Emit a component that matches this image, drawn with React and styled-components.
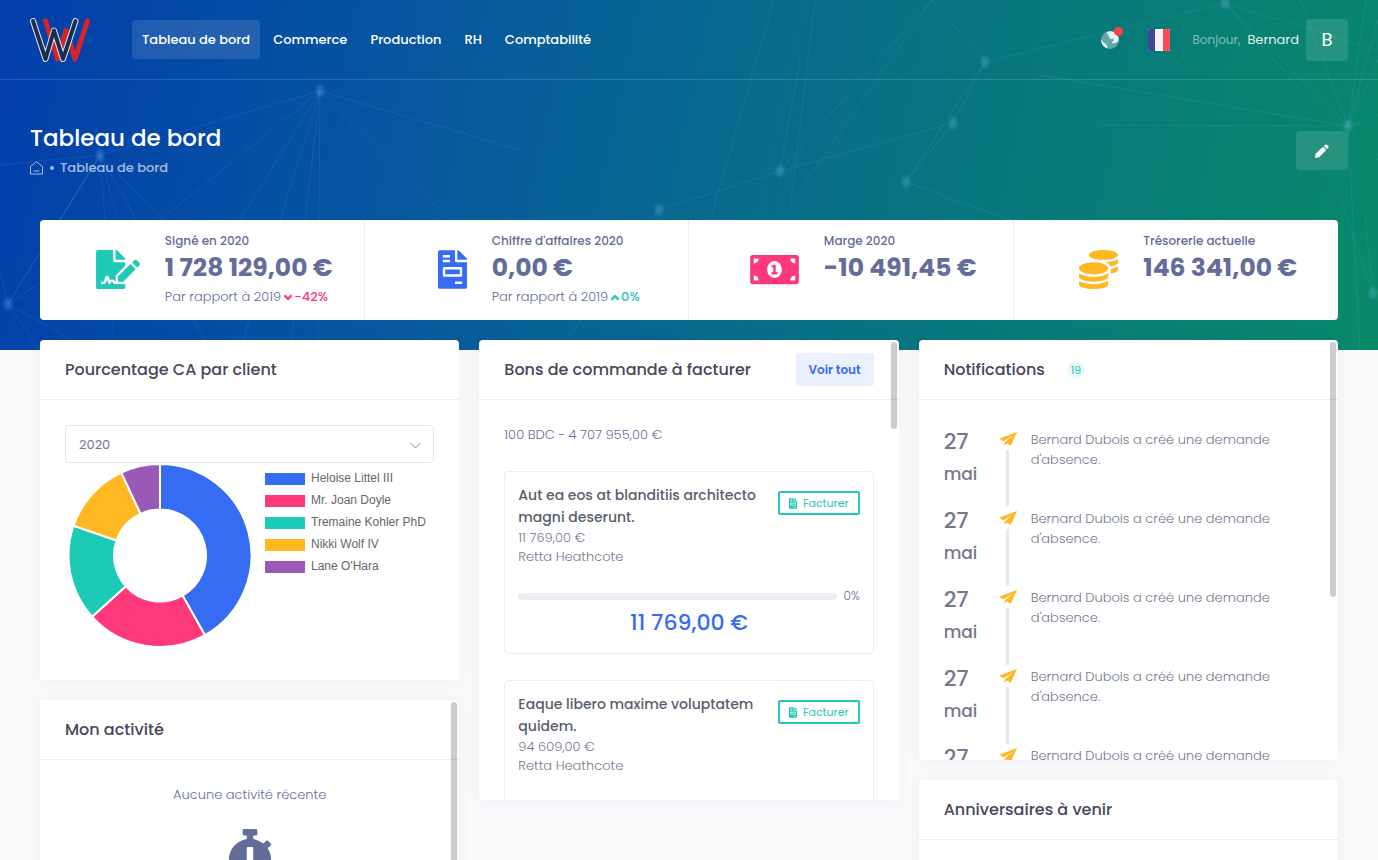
import React, { useState } from 'react';
import styled, { createGlobalStyle } from 'styled-components';
import {
  FaAngleDown,
  FaAngleUp,
  FaCoins,
  FaFileInvoice,
  FaFileSignature,
  FaMoneyBillAlt,
  FaStopwatch,
} from 'react-icons/fa';

const colors = {
  brand: '#366cf3',
  pink: '#fd397a',
  teal: '#1dc9b7',
  yellow: '#ffb822',
  purple: '#9b59b6',
  text: '#646c9a',
  muted: '#74788d',
  dark: '#48465b',
  border: '#ebedf2',
};

const GlobalStyle = createGlobalStyle`
  * {
    box-sizing: border-box;
  }

  html {
    scrollbar-width: none;
  }

  body {
    margin: 0;
    background: #f9f9fc;
    color: ${colors.text};
    font-family: Poppins, Inter, "Open Sans", sans-serif;
    font-size: 13px;
    line-height: 20px;
  }

  h1, h2, h3, p, ul {
    margin: 0;
    padding: 0;
  }

  button, select {
    font-family: inherit;
  }
`;

// Hero
const Hero = styled.div`
  position: relative;
  padding-bottom: 30px;
  background: linear-gradient(102deg, #0340ab 2%, #0755a0 28%, #086791 48%, #08757f 68%, #087f74 84%, #09896a 100%);
`;

const Network = styled.svg`
  position: absolute;
  inset: 0;
  width: 100%;
  height: 100%;
`;

const Header = styled.header`
  position: relative;
  display: flex;
  align-items: center;
  height: 80px;
  padding: 0 30px;
  border-bottom: 1px solid rgba(255, 255, 255, 0.15);
`;

const LogoLink = styled.a`
  display: flex;
  margin-right: 42px;
`;

const Nav = styled.nav`
  display: flex;
  flex: 1;
  gap: 3px;
`;

const NavLink = styled.a`
  padding: 0 10px;
  border-radius: 4px;
  background: ${props => (props.$active ? 'rgba(255, 255, 255, 0.12)' : 'transparent')};
  color: #fff;
  font-weight: 500;
  line-height: 39px;
  text-decoration: none;
`;

const Topbar = styled.div`
  display: flex;
  align-items: center;
`;

const IconButton = styled.button`
  position: relative;
  display: flex;
  padding: 0;
  margin-right: ${props => props.$gap};
  border: 0;
  background: none;
  cursor: pointer;
`;

const Dot = styled.span`
  position: absolute;
  top: -4px;
  right: -4px;
  width: 9px;
  height: 9px;
  border-radius: 50%;
  background: #fd4444;
`;

const UserButton = styled.button`
  display: flex;
  align-items: center;
  gap: 7px;
  padding: 0;
  border: 0;
  background: none;
  color: rgba(255, 255, 255, 0.9);
  font-size: 13px;
  cursor: pointer;

  small {
    color: rgba(255, 255, 255, 0.5);
    font-size: 12px;
  }
`;

const Avatar = styled.span`
  width: 42px;
  border-radius: 4px;
  background: rgba(255, 255, 255, 0.12);
  color: #fff;
  font-size: 18px;
  line-height: 42px;
  text-align: center;
`;

const Subheader = styled.div`
  position: relative;
  display: flex;
  align-items: center;
  justify-content: space-between;
  padding: 41px 30px 40px;
`;

const PageTitle = styled.h1`
  color: #fff;
  font-size: 23px;
  font-weight: 500;
  line-height: 34px;
`;

const Breadcrumb = styled.div`
  display: flex;
  align-items: center;
  gap: 6px;
  height: 25px;
  color: rgba(255, 255, 255, 0.65);

  a {
    display: flex;
    color: inherit;
    font-weight: 500;
    text-decoration: none;
  }

  i {
    width: 4px;
    height: 4px;
    border-radius: 50%;
    background: currentColor;
  }
`;

const EditButton = styled.button`
  display: flex;
  align-items: center;
  justify-content: center;
  width: 52px;
  height: 39px;
  border: 0;
  border-radius: 4px;
  background: rgba(255, 255, 255, 0.12);
  cursor: pointer;
`;

// Stats
const Stats = styled.section`
  position: relative;
  display: grid;
  grid-template-columns: repeat(4, 1fr);
  margin: 0 40px;
  border-radius: 4px;
  background: #fff;
`;

const Stat = styled.div`
  display: flex;
  align-items: center;
  justify-content: center;
  min-height: 100px;

  &:not(:last-child) {
    border-right: 1px solid ${colors.border};
  }
`;

const StatIcon = styled.div`
  display: flex;
  padding: 0 25px 2px;
  color: ${props => props.$color};

  svg {
    width: ${props => props.$width};
    height: 39px;
  }
`;

const StatBody = styled.div`
  align-self: flex-start;
  padding-top: 11px;
`;

const StatLabel = styled.div`
  font-size: 12px;
  font-weight: 500;
`;

const StatValue = styled.div`
  font-size: 25px;
  font-weight: 700;
  line-height: 34px;
  white-space: nowrap;
`;

const StatTrend = styled.div`
  display: flex;
  align-items: center;
  gap: 3px;
  margin-top: 2px;
  font-weight: 300;
  white-space: nowrap;

  strong {
    display: flex;
    align-items: center;
    gap: 2px;
    color: ${props => props.$color};
    font-weight: 500;
  }

  svg {
    width: 8px;
    height: 13px;
    stroke: currentColor;
    stroke-width: 20px;
  }
`;

// Cards
const Columns = styled.main`
  position: relative;
  display: grid;
  grid-template-columns: repeat(3, minmax(0, 1fr));
  align-items: start;
  gap: 20px;
  margin-top: -10px;
  padding: 0 40px 20px;
`;

const Column = styled.div`
  display: flex;
  flex-direction: column;
  gap: 20px;
`;

const Card = styled.section`
  position: relative;
  height: ${props => props.$height || 'auto'};
  overflow: hidden;
  border-radius: 4px;
  background: #fff;
  box-shadow: 0 0 13px rgba(82, 63, 105, 0.05);
`;

const CardHeader = styled.div`
  display: flex;
  align-items: center;
  height: 60px;
  padding: 0 25px;
  border-bottom: 1px solid ${colors.border};
`;

const CardTitle = styled.h2`
  color: ${colors.dark};
  font-size: 16px;
  font-weight: 500;
`;

const CardBody = styled.div`
  padding: 25px;
`;

const Thumb = styled.div`
  position: absolute;
  top: 2px;
  right: 2px;
  width: 6px;
  height: ${props => props.$size};
  border-radius: 3px;
  background: rgba(0, 0, 0, 0.2);
`;

const SelectBox = styled.div`
  position: relative;

  svg {
    position: absolute;
    top: 17px;
    right: 13px;
    pointer-events: none;
  }
`;

const Select = styled.select`
  display: block;
  width: 100%;
  height: 38px;
  padding: 0 13px;
  border: 1px solid #e2e5ec;
  border-radius: 4px;
  appearance: none;
  background: #fff;
  color: ${colors.muted};
  font-size: 13px;
`;

const Chart = styled.div`
  display: flex;
  align-items: flex-start;
  gap: 10px;
  padding-bottom: 7px;
`;

const Legend = styled.ul`
  display: flex;
  flex-direction: column;
  gap: 10px;
  padding-top: 10px;
  list-style: none;
  color: #666;
  font-family: "Liberation Sans", Arial, sans-serif;
  font-size: 12px;
  line-height: 10px;
  white-space: nowrap;
`;

const LegendItem = styled.li`
  display: flex;
  gap: 6px;

  &::before {
    content: '';
    width: 40px;
    height: 12px;
    background: ${props => props.$color};
  }
`;

const Empty = styled.div`
  display: flex;
  flex-direction: column;
  align-items: center;
  gap: 24px;
  font-weight: 300;

  svg {
    width: 46px;
    height: 52px;
  }
`;

const SoftButton = styled.button`
  height: 33px;
  margin-left: auto;
  padding: 0 13px;
  border: 0;
  border-radius: 3px;
  background: #eaf0fe;
  color: ${colors.brand};
  font-size: 12px;
  font-weight: 600;
  cursor: pointer;
`;

const Summary = styled.p`
  margin-bottom: 26px;
  font-weight: 300;
`;

const Order = styled.article`
  margin-bottom: 26px;
  padding: 12px 13px 13px;
  border: 1px solid ${colors.border};
  border-radius: 4px;
`;

const OrderTop = styled.div`
  display: flex;
  justify-content: space-between;
  align-items: flex-start;
  gap: 10px;
  margin-bottom: 20px;
  color: ${colors.muted};
  font-weight: 300;
  line-height: 19px;

  h3 {
    color: #595d6e;
    font-size: 14px;
    font-weight: 500;
    line-height: 22px;
  }
`;

const OutlineButton = styled.button`
  display: flex;
  flex: none;
  align-items: center;
  gap: 6px;
  height: 24px;
  margin-top: 7px;
  padding: 0 9px;
  border: 2px solid ${colors.teal};
  border-radius: 2px;
  background: none;
  color: ${colors.teal};
  font-size: 11px;
  cursor: pointer;

  svg {
    width: 8px;
    height: 11px;
  }
`;

const Progress = styled.div`
  display: flex;
  align-items: center;
  gap: 7px;
  font-size: 12px;
  font-weight: 300;
`;

const Track = styled.div`
  flex: 1;
  height: 7px;
  border-radius: 4px;
  background: #ebedf2;
`;

const Amount = styled.div`
  padding: 1px 0;
  color: ${colors.brand};
  font-size: 22px;
  font-weight: 500;
  line-height: 32px;
  text-align: center;
`;

const Badge = styled.span`
  width: 18px;
  margin-left: 22px;
  border-radius: 50%;
  background: #e8f9f8;
  color: ${colors.teal};
  font-size: 11px;
  line-height: 18px;
  text-align: center;
`;

const Timeline = styled.ul`
  list-style: none;
`;

const TimelineItem = styled.li`
  display: grid;
  grid-template-columns: 55px 18px 1fr;
  height: 79px;
`;

const TimelineDate = styled.div`
  padding-top: 1px;
  color: ${colors.muted};
  font-size: 17px;
  font-weight: 500;
  line-height: 32px;

  strong {
    display: block;
    font-size: 22px;
    font-weight: 500;
  }
`;

const TimelineMarker = styled.div`
  display: flex;
  flex-direction: column;
  align-items: center;
  gap: 4px;
  padding-top: 7px;

  &::after {
    content: '';
    width: 3px;
    height: 57px;
    background: #e5e8f5;
  }
`;

const TimelineText = styled.p`
  max-width: 280px;
  padding: 5px 0 0 14px;
  color: ${colors.muted};
  font-weight: 300;
`;

const Logo = () => (
  <svg width="60" height="44" viewBox="0 0 60 44" fill="none" strokeLinecap="round" strokeLinejoin="round">
    <path d="M15.500 3l12 38L36 12.500l9 28.500L57.500 3" stroke="#d8232a" strokeWidth="5" />
    <path d="M3 3l12.500 38L24 12.500 33 41 45.500 3" stroke="#dfe4ee" strokeWidth="6" />
    <path d="M3 3l12.500 38L24 12.500 33 41 45.500 3" stroke="#1b2d50" strokeWidth="4" />
  </svg>
);

const GlobeIcon = () => (
  <svg width="18" height="18" viewBox="0 0 18 18">
    <circle cx="9" cy="9" r="9" fill="#fff" opacity="0.35" />
    <path
      d="M5.500 1.200Q9-.5 13 1l4 4q1.500 4-.5 6l-4 1.500-2-1 2.500-2-1-2-3 .5-1-2.500zM0 8l2 3 3 2 2 4.500Q0 16 0 8z"
      fill="#fff"
      opacity="0.85"
    />
  </svg>
);

const FlagIcon = () => (
  <svg width="22" height="22" viewBox="0 0 22 22">
    <rect width="22" height="22" rx="2" fill="#f5f5f5" />
    <path d="M7 0H2a2 2 0 0 0-2 2v18a2 2 0 0 0 2 2h5z" fill="#41479b" />
    <path d="M15 0h5a2 2 0 0 1 2 2v18a2 2 0 0 1-2 2h-5z" fill="#ff4b55" />
  </svg>
);

const HomeIcon = () => (
  <svg width="14" height="14" viewBox="0 0 14 14" fill="none" stroke="currentColor">
    <path d="M.5 5.500L6.500.8l6 4.700v7.500H.5zM3.500 10h6" />
  </svg>
);

const PencilIcon = () => (
  <svg width="14" height="14" viewBox="0 0 14 14" fill="#fff">
    <path d="M0 14l.6-4.200L8 2.800l3.200 3.200-7 7.200zM8.900 2l1.500-1.300q.8-.6 1.600 0L13.300 2q.8.800.1 1.600L12 5.200z" />
  </svg>
);

const PlaneIcon = () => (
  <svg width="18" height="14" viewBox="0 0 18 14" fill={colors.yellow}>
    <path d="M18 0L0 6.800l4.500 2.400L14 3.500 6 10.200l-1 3.500 3-2.200 3.800 2.300z" />
  </svg>
);

const nodes = [
  { x: 320, y: 91, to: [[100, 155], [160, 220], [215, 260], [240, 350], [290, 350], [318, 350], [460, 230], [520, 150]] },
  { x: 100, y: 155, to: [[0, 165], [8, 304], [60, 220], [115, 350], [140, 300], [230, 290], [210, 350]] },
  { x: 8, y: 304, to: [[100, 155], [0, 270], [120, 230], [90, 350], [40, 350]] },
  { x: 1348, y: 126, to: [[1225, 3], [1378, 20], [1366, 0], [1378, 60], [1040, 75], [1100, 125], [1320, 142], [1378, 160], [1360, 350], [1378, 115], [1300, 0]] },
  { x: 659, y: 210, to: [[780, 171], [560, 350]] },
  { x: 780, y: 171, to: [[953, 123], [800, 60], [932, 0]] },
  { x: 953, y: 123, to: [[985, 62], [906, 182]] },
  { x: 906, y: 182, to: [[985, 62], [1010, 220]] },
  { x: 985, y: 62, to: [[932, 0], [1225, 3]] },
  { x: 1225, y: 3, to: [[1300, 90], [1378, 50]] },
  { x: 1373, y: 293, to: [[1340, 200], [1365, 215]] },
];

const NetworkBackdrop = () => (
  <Network viewBox="0 0 1378 350" preserveAspectRatio="xMidYMin slice" aria-hidden="true">
    <defs>
      <radialGradient id="node">
        <stop offset="0.4" stopColor="#8fd0ff" stopOpacity="0.2" />
        <stop offset="1" stopColor="#8fd0ff" stopOpacity="0" />
      </radialGradient>
    </defs>
    {nodes.map(node => (
      <g key={`${node.x}-${node.y}`}>
        {node.to.map(([x, y]) => (
          <line key={`${x}-${y}`} x1={node.x} y1={node.y} x2={x} y2={y} stroke="#9fc8ff" strokeOpacity="0.11" />
        ))}
        <ellipse cx={node.x} cy={node.y} rx="6" ry="8" fill="url(#node)" />
      </g>
    ))}
    <path d="M774 0L710 220M815 0L790 210M932 0L800 190" stroke="#9fe0ff" strokeOpacity="0.09" />
  </Network>
);

const clients = [
  { name: 'Heloise Littel III', color: colors.brand, end: 150.6 },
  { name: 'Mr. Joan Doyle', color: colors.pink, end: 228 },
  { name: 'Tremaine Kohler PhD', color: colors.teal, end: 289 },
  { name: 'Nikki Wolf IV', color: colors.yellow, end: 335 },
  { name: "Lane O'Hara", color: colors.purple, end: 360 },
];

const point = (angle, radius) => {
  const rad = (angle * Math.PI) / 180;
  return `${95 + radius * Math.sin(rad)} ${92.5 - radius * Math.cos(rad)}`;
};

const slice = (start, end) => {
  const large = end - start > 180 ? 1 : 0;
  return `M${point(start, 91.5)}A91.5 91.5 0 ${large} 1 ${point(end, 91.5)}L${point(end, 46)}A46 46 0 ${large} 0 ${point(start, 46)}Z`;
};

const Doughnut = () => (
  <svg width="190" height="185" viewBox="0 0 190 185" role="img" aria-label="Pourcentage CA par client">
    {clients.map((client, i) => (
      <path
        key={client.name}
        d={slice(i ? clients[i - 1].end : 0, client.end)}
        fill={client.color}
        stroke="#fff"
        strokeWidth="2"
      />
    ))}
  </svg>
);

const menu = ['Tableau de bord', 'Commerce', 'Production', 'RH', 'Comptabilité'];

const stats = [
  { label: 'Signé en 2020', value: '1 728 129,00 €', icon: <FaFileSignature />, width: '44px', color: colors.teal, trend: '-42%', down: true },
  { label: "Chiffre d'affaires 2020", value: '0,00 €', icon: <FaFileInvoice />, width: '29px', color: colors.brand, trend: '0%' },
  { label: 'Marge 2020', value: '-10 491,45 €', icon: <FaMoneyBillAlt />, width: '49px', color: colors.pink },
  { label: 'Trésorerie actuelle', value: '146 341,00 €', icon: <FaCoins />, width: '39px', color: colors.yellow },
];

const orders = [
  { title: 'Aut ea eos at blanditiis architecto magni deserunt.', amount: '11 769,00 €', client: 'Retta Heathcote' },
  { title: 'Eaque libero maxime voluptatem quidem.', amount: '94 609,00 €', client: 'Retta Heathcote' },
];

const notifications = Array.from({ length: 5 }, (_, id) => ({
  id,
  day: '27',
  month: 'mai',
  text: "Bernard Dubois a créé une demande d'absence.",
}));

const App = () => {
  const [year, setYear] = useState('2020');

  return (
    <>
      <GlobalStyle />
      <Hero>
        <NetworkBackdrop />
        <Header>
          <LogoLink href="#" aria-label="Accueil">
            <Logo />
          </LogoLink>
          <Nav>
            {menu.map((item, i) => (
              <NavLink key={item} href="#" $active={i === 0}>{item}</NavLink>
            ))}
          </Nav>
          <Topbar>
            <IconButton $gap="29px" aria-label="Notifications">
              <GlobeIcon />
              <Dot />
            </IconButton>
            <IconButton $gap="22px" aria-label="Langue">
              <FlagIcon />
            </IconButton>
            <UserButton>
              <small>Bonjour,</small>
              <span>Bernard</span>
              <Avatar>B</Avatar>
            </UserButton>
          </Topbar>
        </Header>

        <Subheader>
          <div>
            <PageTitle>Tableau de bord</PageTitle>
            <Breadcrumb>
              <a href="#" aria-label="Accueil"><HomeIcon /></a>
              <i />
              <a href="#">Tableau de bord</a>
            </Breadcrumb>
          </div>
          <EditButton aria-label="Modifier">
            <PencilIcon />
          </EditButton>
        </Subheader>

        <Stats>
          {stats.map(stat => (
            <Stat key={stat.label}>
              <StatIcon $color={stat.color} $width={stat.width}>{stat.icon}</StatIcon>
              <StatBody>
                <StatLabel>{stat.label}</StatLabel>
                <StatValue>{stat.value}</StatValue>
                {stat.trend && (
                  <StatTrend $color={stat.down ? colors.pink : colors.teal}>
                    Par rapport à 2019
                    <strong>
                      {stat.down ? <FaAngleDown /> : <FaAngleUp />}
                      {stat.trend}
                    </strong>
                  </StatTrend>
                )}
              </StatBody>
            </Stat>
          ))}
        </Stats>
      </Hero>

      <Columns>
        <Column>
          <Card>
            <CardHeader>
              <CardTitle>Pourcentage CA par client</CardTitle>
            </CardHeader>
            <CardBody>
              <SelectBox>
                <Select aria-label="Année" value={year} onChange={e => setYear(e.target.value)}>
                  <option>2020</option>
                  <option>2019</option>
                </Select>
                <svg width="11" height="7" viewBox="0 0 11 7" fill="none" stroke="#8a87a8">
                  <path d="M.5 1l5 5 5-5" />
                </svg>
              </SelectBox>
              <Chart>
                <Doughnut />
                <Legend>
                  {clients.map(client => (
                    <LegendItem key={client.name} $color={client.color}>{client.name}</LegendItem>
                  ))}
                </Legend>
              </Chart>
            </CardBody>
          </Card>

          <Card $height="340px">
            <CardHeader>
              <CardTitle>Mon activité</CardTitle>
            </CardHeader>
            <CardBody>
              <Empty>
                <p>Aucune activité récente</p>
                <FaStopwatch />
              </Empty>
            </CardBody>
            <Thumb $size="260px" />
          </Card>
        </Column>

        <Column>
          <Card $height="460px">
            <CardHeader>
              <CardTitle>Bons de commande à facturer</CardTitle>
              <SoftButton>Voir tout</SoftButton>
            </CardHeader>
            <CardBody>
              <Summary>100 BDC - 4 707 955,00 €</Summary>
              {orders.map(order => (
                <Order key={order.title}>
                  <OrderTop>
                    <div>
                      <h3>{order.title}</h3>
                      <p>{order.amount}</p>
                      <p>{order.client}</p>
                    </div>
                    <OutlineButton>
                      <FaFileInvoice />
                      Facturer
                    </OutlineButton>
                  </OrderTop>
                  <Progress>
                    <Track role="progressbar" aria-valuenow={0} aria-label="Avancement" />
                    0%
                  </Progress>
                  <Amount>{order.amount}</Amount>
                </Order>
              ))}
            </CardBody>
            <Thumb $size="87px" />
          </Card>
        </Column>

        <Column>
          <Card $height="420px">
            <CardHeader>
              <CardTitle>Notifications</CardTitle>
              <Badge>19</Badge>
            </CardHeader>
            <CardBody>
              <Timeline>
                {notifications.map(item => (
                  <TimelineItem key={item.id}>
                    <TimelineDate>
                      <strong>{item.day}</strong>
                      {item.month}
                    </TimelineDate>
                    <TimelineMarker>
                      <PlaneIcon />
                    </TimelineMarker>
                    <TimelineText>{item.text}</TimelineText>
                  </TimelineItem>
                ))}
              </Timeline>
            </CardBody>
            <Thumb $size="255px" />
          </Card>

          <Card $height="340px">
            <CardHeader>
              <CardTitle>Anniversaires à venir</CardTitle>
            </CardHeader>
          </Card>
        </Column>
      </Columns>
    </>
  );
};

export default App;
